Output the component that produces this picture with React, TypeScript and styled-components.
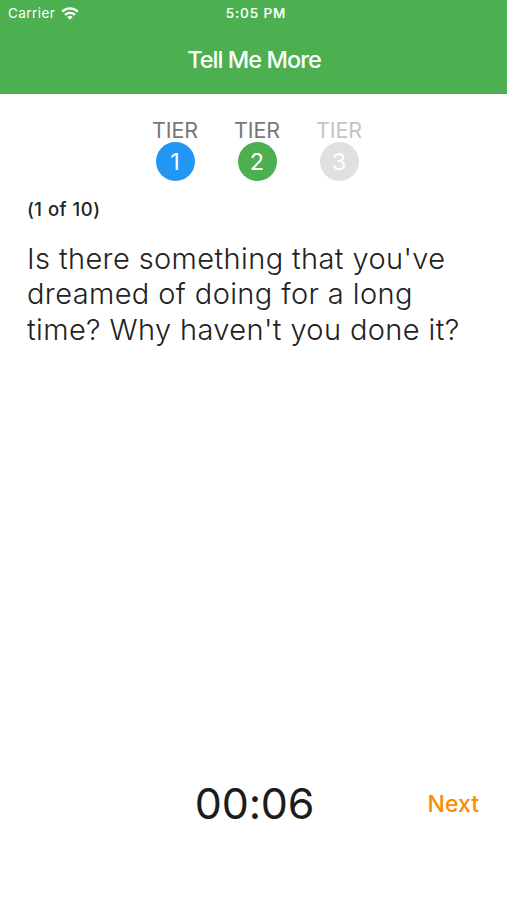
import React from "react";
import styled, { createGlobalStyle } from "styled-components";

const GlobalStyle = createGlobalStyle`
  *, *::before, *::after { box-sizing: border-box; }
  body { margin: 0; background: #fff; font-family: Inter, sans-serif; }
`;

const Screen = styled.div`
  width: 507px;
  height: 900px;
  display: flex;
  flex-direction: column;
  background: #fff;
  overflow: hidden;
`;

const Header = styled.header`
  flex: none;
  height: 94px;
  background: #4caf50;
  color: #fff;
`;

const StatusBar = styled.div`
  height: 27px;
  padding: 0 8px;
  display: grid;
  grid-template-columns: 1fr auto 1fr;
  align-items: start;
`;

const Carrier = styled.div`
  display: flex;
  align-items: center;
  gap: 6px;
  font-size: 13.5px;
  line-height: 26px;
  letter-spacing: 0.42px;
`;

const Clock = styled.div`
  font-size: 13.5px;
  font-weight: 500;
  line-height: 26px;
  letter-spacing: 0.95px;
  padding-left: 5px;
  -webkit-text-stroke: 0.15px #fff;
`;

const Title = styled.h1`
  margin: 0;
  height: 67px;
  padding-left: 1px;
  text-align: center;
  font-size: 23.5px;
  font-weight: 500;
  line-height: 66px;
  letter-spacing: -0.95px;
`;

const Tiers = styled.div`
  display: flex;
  justify-content: center;
  gap: 22px;
  padding: 25px 0 0 7px;
`;

const Tier = styled.div<{ $muted?: boolean }>`
  width: 60px;
  display: flex;
  flex-direction: column;
  align-items: center;
  font-size: 21.5px;
  line-height: 23px;
  letter-spacing: -0.1px;
  color: ${(p) => (p.$muted ? "#c4c4c4" : "#777")};
`;

const Badge = styled.span<{ $color: string }>`
  width: 39px;
  height: 39px;
  border-radius: 50%;
  background: ${(p) => p.$color};
  color: #fff;
  font-size: 23.5px;
  line-height: 39px;
  letter-spacing: 0;
  text-align: center;
`;

const Content = styled.main`
  flex: 1;
  padding: 16px 27px 0;
`;

const Progress = styled.div`
  font-size: 18.5px;
  font-weight: 500;
  line-height: 25px;
  letter-spacing: 0.5px;
  color: #222;
`;

const Question = styled.p`
  margin: 19px 0 0;
  font-size: 29px;
  font-weight: 300;
  line-height: 35.4px;
  letter-spacing: 0.39px;
  color: #222;
  white-space: pre-line;
`;

const Footer = styled.footer`
  height: 130px;
  flex: none;
  padding: 6px 28px 0;
  display: grid;
  grid-template-columns: 1fr auto 1fr;
  align-items: start;
`;

const Timer = styled.div`
  grid-column: 2;
  padding-left: 2px;
  font-size: 43px;
  line-height: 54px;
  letter-spacing: -0.2px;
  color: #1c1c1c;
`;

const Next = styled.button`
  justify-self: end;
  padding: 0;
  border: 0;
  background: none;
  font: 500 23px/56px Inter, sans-serif;
  color: #fb8c00;
`;

const tiers = [
  { n: 1, color: "#2196f3" },
  { n: 2, color: "#4caf50" },
  { n: 3, color: "#e0e0e0", muted: true },
];

const Wifi = () => (
  <svg width="18" height="13" viewBox="0 0 18 13" fill="none" stroke="#fff" strokeWidth="2.3">
    <path d="M1.2 4.7a11 11 0 0 1 15.6 0M4 7.8a7.2 7.2 0 0 1 10 0" />
    <path d="M9 12.7 6.3 10a3.9 3.9 0 0 1 5.4 0Z" fill="#fff" stroke="none" />
  </svg>
);

export default function App() {
  return (
    <Screen>
      <GlobalStyle />
      <Header>
        <StatusBar>
          <Carrier>Carrier <Wifi /></Carrier>
          <Clock>5:05 PM</Clock>
        </StatusBar>
        <Title>Tell Me More</Title>
      </Header>
      <Tiers>
        {tiers.map((t) => (
          <Tier key={t.n} $muted={t.muted}>
            TIER
            <Badge $color={t.color}>{t.n}</Badge>
          </Tier>
        ))}
      </Tiers>
      <Content>
        <Progress>(1 of 10)</Progress>
        <Question>{"Is there something that you've\ndreamed of doing for a long\ntime? Why haven't you done it?"}</Question>
      </Content>
      <Footer>
        <Timer>00:06</Timer>
        <Next>Next</Next>
      </Footer>
    </Screen>
  );
}
